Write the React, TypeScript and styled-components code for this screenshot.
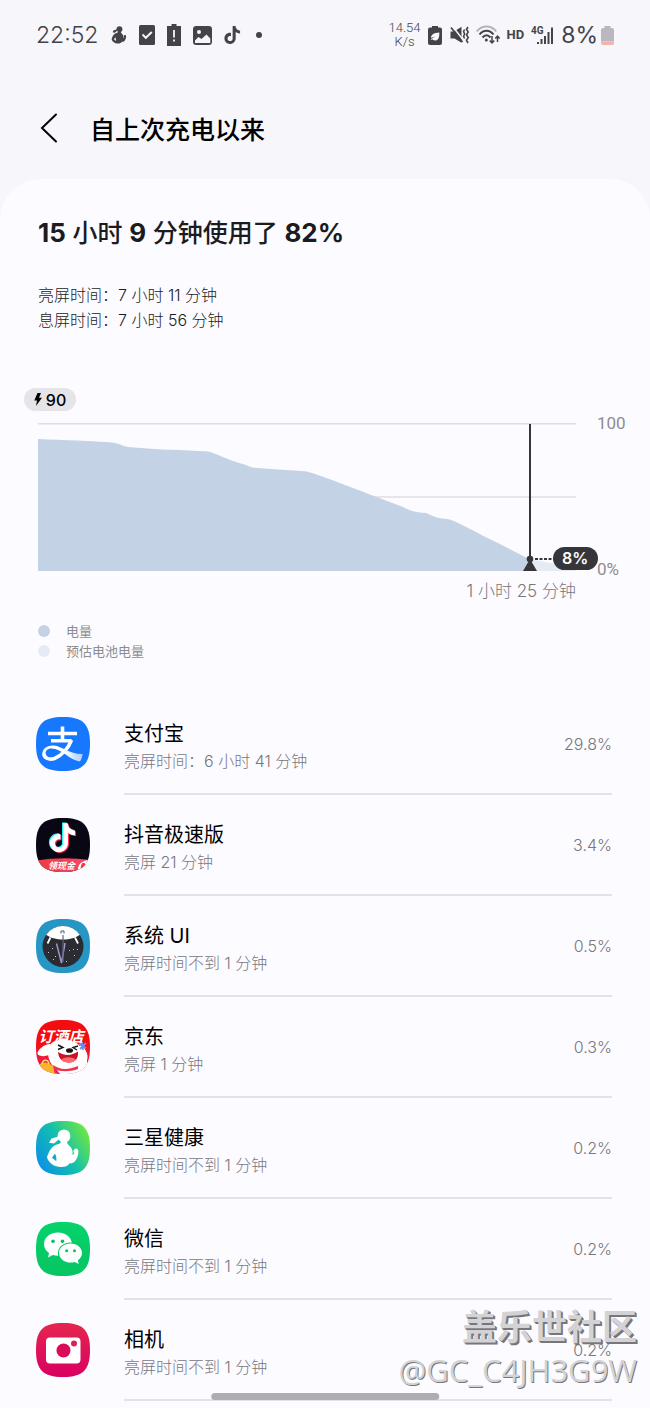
import React from "react";
import styled, { createGlobalStyle } from "styled-components";

const sans = `Inter, "Noto Sans CJK SC", sans-serif`;

const GlobalStyle = createGlobalStyle`
  * { box-sizing: border-box; }
  html { background: #f6f6fb; }
  body { margin: 0; font-family: ${sans}; color: #1b1b20; }
  h1, h2, h3, p, ul, dl, dd { margin: 0; padding: 0; }
  ul { list-style: none; }
  svg { display: block; flex: none; }
`;

const Screen = styled.div`
  display: flex;
  flex-direction: column;
  min-height: 100vh;
  background: #f6f6fb;
`;

const StatusBar = styled.header`
  display: flex;
  align-items: center;
  justify-content: space-between;
  height: 70px;
  padding: 0 36px;
  color: #444448;
`;

const StatusGroup = styled.div<{ $gap: number }>`
  display: flex;
  align-items: center;
  gap: ${(p) => p.$gap}px;
`;

const Clock = styled.time`
  font-size: 23px;
  font-weight: 300;
  line-height: 28px;
`;

const NetSpeed = styled.span`
  font: 300 13px/14px Roboto, sans-serif;
  text-align: center;
  width: 32px;
`;

const HdBadge = styled.span`
  font: 700 13px/16px Roboto, sans-serif;
`;

const BatteryLevel = styled.span`
  display: flex;
  align-items: center;
  gap: 3px;
  font-size: 23px;
  font-weight: 400;
  line-height: 28px;
`;

const TitleBar = styled.div`
  display: flex;
  align-items: center;
  gap: 26px;
  height: 109px;
  padding: 10px 36px 0;
`;

const BackButton = styled.button`
  display: flex;
  padding: 0 0 4px;
  border: 0;
  background: none;
  color: #000;
  cursor: pointer;
`;

const PageTitle = styled.h1`
  font-size: 25px;
  font-weight: 500;
  line-height: 36px;
  color: #000;
`;

const Card = styled.main`
  flex: 1;
  padding: 34px 38px 8px;
  border-radius: 40px 40px 0 0;
  background: #fcfbff;
`;

const Headline = styled.h2`
  font-size: 25px;
  font-weight: 500;
  line-height: 40px;
`;

const Figure = styled.strong`
  font-size: 26px;
  font-weight: 700;
`;

const Summary = styled.div`
  margin-top: 30px;
  font-size: 16px;
  font-weight: 300;
  line-height: 25px;
  color: #1b1b20;
`;

const Chart = styled.figure`
  display: grid;
  grid-template-columns: 1fr 62px;
  margin: 55px -26px 0 0;
`;

const ChargeTag = styled.span`
  grid-column: 1 / 3;
  justify-self: start;
  display: flex;
  align-items: center;
  justify-content: center;
  gap: 4px;
  width: 52px;
  height: 23px;
  margin: 0 0 12px -14px;
  border-radius: 12px;
  background: #e5e4e9;
  color: #000;
  font-size: 16px;
  font-weight: 500;
`;

const Plot = styled.div`
  position: relative;
  height: 148px;

  > svg { width: 100%; height: 100%; }
`;

const Marker = styled.div`
  position: absolute;
  left: 91%;
  top: 0;
  bottom: 0;
  display: flex;
  align-items: flex-end;
  margin-left: -6px;
  color: #36363a;

  &::before {
    content: "";
    position: absolute;
    left: 7px;
    top: 1px;
    bottom: 8px;
    width: 2px;
    background: currentColor;
  }
`;

const LevelTag = styled.span`
  align-self: flex-end;
  width: 45px;
  height: 23px;
  margin: 0 0 1px -1px;
  border-radius: 12px;
  background: #36363a;
  color: #fff;
  font-size: 16px;
  font-weight: 600;
  line-height: 23px;
  text-align: center;
`;

const Axis = styled.div`
  display: flex;
  flex-direction: column;
  justify-content: space-between;
  margin: -10px 0 -8px;
  padding-left: 21px;
  font: 400 17px/20px Roboto, sans-serif;
  color: #8d8d92;
`;

const Remaining = styled.figcaption`
  margin-top: 8px;
  text-align: right;
  font-size: 17px;
  font-weight: 300;
  line-height: 24px;
  color: #77777c;
`;

const Legend = styled.ul`
  margin-top: 18px;
  font-size: 13px;
  line-height: 20px;
  color: #8d8d92;
`;

const LegendItem = styled.li<{ $color: string }>`
  display: flex;
  align-items: center;
  gap: 16px;

  &::before {
    content: "";
    width: 12px;
    height: 12px;
    border-radius: 50%;
    background: ${(p) => p.$color};
  }
`;

const AppList = styled.ul`
  margin-top: 33px;
`;

const AppRow = styled.li`
  display: flex;
  align-items: center;
  gap: 34px;
  margin-left: -2px;

  > svg { margin-bottom: 2px; }
`;

const AppBody = styled.div`
  flex: 1;
  display: flex;
  align-items: center;
  justify-content: space-between;
  height: 101px;
  border-bottom: 2px solid #e3e2e8;
`;

const AppText = styled.div`
  padding-top: 6px;
`;

const AppName = styled.h3`
  font-size: 20px;
  font-weight: 400;
  line-height: 28px;
  color: #000;
`;

const AppDetail = styled.p`
  font-size: 16px;
  font-weight: 300;
  line-height: 26px;
  color: #77777c;
`;

const AppShare = styled.span`
  font-size: 16px;
  font-weight: 300;
  color: #77777c;
`;

const Watermark = styled.div`
  position: absolute;
  right: 13px;
  top: 1302px;
  text-align: right;
  pointer-events: none;
  color: #d3d3d5;
`;

const WatermarkSite = styled.p`
  font: 700 35px/46px "Noto Sans CJK SC", sans-serif;
  text-shadow: 1px 1px 0 #77777b, 2px 2px 0 #77777b;
`;

const WatermarkUser = styled.p`
  font: 400 31px/44px "Open Sans", sans-serif;
  text-shadow: 1px 1px 0 #77777b;
`;

const HomeHandle = styled.div`
  position: fixed;
  left: 50%;
  bottom: 8px;
  width: 35%;
  height: 7px;
  border-radius: 4px;
  background: #aeaeb2;
  transform: translateX(-50%);
`;

const NOTE =
  "M12.525.02c1.31-.02 2.61-.01 3.91-.02.08 1.53.63 3.09 1.75 4.17 1.12 1.11 2.7 1.62 4.24 1.79v4.03c-1.44-.05-2.89-.35-4.2-.97-.57-.26-1.1-.59-1.62-.93-.01 2.92.01 5.84-.02 8.75-.08 1.4-.54 2.79-1.35 3.94-1.31 1.92-3.58 3.17-5.91 3.21-1.43.08-2.86-.31-4.08-1.03-2.02-1.19-3.44-3.37-3.65-5.71-.02-.5-.03-1-.01-1.49.18-1.9 1.12-3.72 2.58-4.96 1.66-1.44 3.98-2.13 6.15-1.72.02 1.48-.04 2.96-.04 4.44-.99-.32-2.15-.23-3.02.37-.63.41-1.11 1.04-1.36 1.75-.21.51-.15 1.07-.14 1.61.24 1.64 1.82 3.02 3.5 2.87 1.12-.01 2.19-.66 2.77-1.61.19-.33.4-.67.41-1.06.1-1.79.06-3.57.07-5.36.01-4.03-.01-8.05.02-12.07z";

const SQUIRCLE =
  "M27 0C47 0 54 7 54 27S47 54 27 54 0 47 0 27 7 0 27 0Z";

const ATHLETE_HEAD =
  "M28 8.500a6.400 6.400 0 0 1 6.400 6.400c0 2.700-1.400 4.800-3.400 5.900h-6c-1-.6-1.800-1.400-2.400-2.400l-4.600 4.100-5-.8 2.500-4.300 6-1.600v-.9A6.500 6.500 0 0 1 28 8.500Z";
const ATHLETE_BODY =
  "M25 20h6c0 3 1.500 4 3.300 5.800 2 2 2.600 4.400 2.200 8.200l1.900-1.500c-1.200-1.500-1.400-3 0-4.300 1.500-1.300 3.900-.4 4 2 .1 4.300-1.600 8.300-4.200 10.800-1.700 1.600-3.500 1.500-4.700 1.200C32 45 29 46 25 46c-6.500 0-12.800-4-14-10 1.500-5 4-9.500 7.500-11.500 3-1.500 6.500-1.300 6.500-4.500Z";
const ATHLETE_GAP = "m19 32.500-3 4.300 4.300 3.500c.4-3-.1-5.500-1.300-7.800Z";

function Squircle({ id, fill, children }: { id: string; fill: string; children?: React.ReactNode }) {
  return (
    <svg width="54" height="54" viewBox="0 0 54 54" aria-hidden="true">
      <defs>
        <clipPath id={`clip-${id}`}><path d={SQUIRCLE} /></clipPath>
        <linearGradient id="health" x1="0" y1="0.8" x2="1" y2="0.2">
          <stop offset="0" stopColor="#0c8fe8" />
          <stop offset="0.5" stopColor="#12bfae" />
          <stop offset="1" stopColor="#74ea3c" />
        </linearGradient>
        <linearGradient id="camera" x1="0" y1="0" x2="0" y2="1">
          <stop offset="0" stopColor="#e5264f" />
          <stop offset="1" stopColor="#d80061" />
        </linearGradient>
        <linearGradient id="wechat" x1="0" y1="0" x2="0" y2="1">
          <stop offset="0" stopColor="#04d36b" />
          <stop offset="1" stopColor="#08c463" />
        </linearGradient>
        <linearGradient id="jd" x1="0" y1="0" x2="0" y2="1">
          <stop offset="0.4" stopColor="#f40d10" />
          <stop offset="1" stopColor="#e8246a" />
        </linearGradient>
        <linearGradient id="cash" x1="0" y1="0" x2="1" y2="0">
          <stop offset="0" stopColor="#ef3a43" />
          <stop offset="1" stopColor="#f5486e" />
        </linearGradient>
        <linearGradient id="swoosh" x1="0" y1="0" x2="1" y2="0">
          <stop offset="0.55" stopColor="#fff" />
          <stop offset="1" stopColor="#a9cdff" />
        </linearGradient>
      </defs>
      <g clipPath={`url(#clip-${id})`}>
        <path d="M0 0h54v54H0z" fill={fill} />
        {children}
      </g>
    </svg>
  );
}

const AlipayIcon = () => (
  <Squircle id="alipay" fill="#1677ff">
    <g fill="none" stroke="#fff">
      <path d="M12 16.500h29M26.500 9.500v13" strokeWidth="3.600" />
      <path d="M15 23.800h20.500" strokeWidth="3.400" />
      <path d="M35.500 23C32.500 31 26 38.500 18.500 41.500 12.500 43.500 7.800 40.500 8 36.500" strokeWidth="3.600" />
    </g>
    <path d="M6.400 37.500C6 31.500 11.500 27.800 18 28.500c8 .8 16 9 28.500 8.500-.2 3-1 5-2.500 7.500C33.500 43.500 26 31.600 15.500 31.600c-3.500 0-6 2-5.900 4.900Z" fill="url(#swoosh)" />
  </Squircle>
);

const DouyinIcon = () => (
  <Squircle id="douyin" fill="#080713">
    <g transform="translate(11 4.500) scale(1.200)">
      <path d={NOTE} fill="#25f4ee" />
      <path d={NOTE} fill="#fe2c55" transform="translate(1.800 1.400)" />
      <path d={NOTE} fill="#fff" transform="translate(.9 .7)" />
    </g>
    <path d="M0 42.500Q27 38.500 54 42v12H0Z" fill="url(#cash)" />
    <text x="25.500" y="51" fontSize="9" fontWeight="700" fontStyle="italic" textAnchor="middle" fill="#fff" fontFamily="Noto Sans CJK SC">领现金</text>
    <path d="M42 54c-1-7 3-11.500 12-12v12z" fill="#fff" />
    <ellipse cx="47" cy="48" rx="2" ry="3.200" fill="#ef3a43" transform="rotate(20 47 48)" />
  </Squircle>
);

const SystemUiIcon = () => (
  <Squircle id="system" fill="#2696c5">
    <circle cx="27" cy="27.500" r="20.500" fill="#2b2b32" />
    <path d="M10.200 15.700A20.500 20.500 0 0 1 43.800 15.700C36.500 22 17.500 22 10.200 15.700Z" fill="#fff" />
    <path d="m14.500 18.500-3 6M39 18.500l3 6" stroke="#fff" strokeWidth="1.800" />
    <path d="M20.500 24.500 25.500 44 29 24" stroke="#9c97c6" strokeWidth="1.500" fill="none" />
    <path d="M27 16v27" stroke="#66617e" strokeWidth="1.200" />
    <path d="M25 14.500v-2.500h3v2.500" stroke="#555" fill="none" />
    <path d="m12 33 1 1m6 3 1 1m13-7 1 1m4 4 1 1m-9 5 1 1m6-13 1 1M17 40l1 1m-2-12 1 1m24 0 1 1" stroke="#c8c8d8" strokeWidth="1" />
  </Squircle>
);

const JdIcon = () => (
  <Squircle id="jd" fill="url(#jd)">
    <path d="M14 24C8 24 2 30 1.500 33c0 4 9 4 13 1M44 24c6 4 10 13 6 18-3 2-5-1-6-5" fill="#fff" />
    <path d="M12 29C13 22 22 19 31 20c10 1 16 7 15.500 14 6 4 6 12 2 20H24c-2-4-9-8-11-15-1-4-1.500-7-1-10Z" fill="#fff" />
    <path d="M17 45c6 4 13 6 25 1v3c-8 3-18 3-24 0Z" fill="#f1344b" />
    <path d="M22 32c7 4 13 4 20-.5.5 7-2.500 11-9 11-6.500 0-10.500-4-11-10.500Z" fill="#c71527" />
    <path d="M25 39.500c5-3 10-3 15 0-2 2.500-4 3-7 3-3.500 0-6-.5-8-3Z" fill="#ff6b70" />
    <ellipse cx="33.500" cy="30.500" rx="3.500" ry="2.300" fill="#151515" />
    <path d="m22 25 5 2.500-5 2M42 26l-5 1.500 4 2.500" stroke="#181818" strokeWidth="1.400" fill="none" />
    <path d="m43 24 7 4m-6 1 6-6m-4-1 1 8" stroke="#6d8be8" strokeWidth="1.800" />
    <path d="M3 45c4-4 9-3 14 1l2 8H0Z" fill="#f7b52d" />
    <path d="M6 44c1-5 6-5 7 0" stroke="#ffdb62" strokeWidth="1.500" fill="none" />
    <text x="25" y="22" fontSize="15" fontWeight="700" fontStyle="italic" textAnchor="middle" fill="#fff" fontFamily="Noto Sans CJK SC">订酒店</text>
  </Squircle>
);

const HealthIcon = () => (
  <Squircle id="health" fill="url(#health)">
    <path d={ATHLETE_HEAD} fill="#fff" />
    <path d={ATHLETE_BODY} fill="#fff" />
    <path d={ATHLETE_GAP} fill="#13aac5" />
  </Squircle>
);

const WechatIcon = () => (
  <Squircle id="wechat" fill="url(#wechat)">
    <path d="M22 10.500C13.500 10.500 8 15.800 8 22c0 3.800 2 7 5 9l-1 4.500 4.800-2.500c1.700.5 3.400.8 5.200.8 8 0 14-5.200 14-11.500s-6-11.800-14-11.800Z" fill="#fff" />
    <ellipse cx="34.500" cy="31.200" rx="12.600" ry="10.800" fill="#06ca67" />
    <path d="M34.500 21.500c-6.500 0-11.500 4.200-11.500 9.500s5 9.600 11.500 9.600c1.500 0 3-.2 4.200-.6l4 2-.8-3.700c2.500-1.800 4.100-4.300 4.100-7.300 0-5.300-5-9.500-11.500-9.500Z" fill="#fff" />
    <g fill="#07bf62">
      <circle cx="17" cy="19.300" r="1.800" /><circle cx="26.500" cy="19.300" r="1.800" />
      <circle cx="30.700" cy="28.700" r="1.500" /><circle cx="38.500" cy="28.700" r="1.500" />
    </g>
  </Squircle>
);

const CameraIcon = () => (
  <Squircle id="camera" fill="url(#camera)">
    <rect x="10" y="14.500" width="34.500" height="26" rx="4" fill="#fff" />
    <circle cx="27.500" cy="27.500" r="7" fill="#d80c58" />
    <circle cx="38" cy="20.500" r="3" fill="#df2052" />
  </Squircle>
);

const HealthGlyph = () => (
  <svg width="16" height="18" viewBox="10 8 34 39" fill="currentColor" aria-hidden="true">
    <path d={ATHLETE_HEAD} />
    <path d={ATHLETE_BODY} />
    <path d={ATHLETE_GAP} fill="#f6f6fb" />
  </svg>
);

const CheckGlyph = () => (
  <svg width="16" height="20" viewBox="0 0 16 20" aria-hidden="true">
    <rect width="16" height="20" rx="1.500" fill="currentColor" />
    <path d="m3.500 9.500 3.300 3.300L12.800 7" stroke="#f6f6fb" strokeWidth="2" fill="none" />
  </svg>
);

const BatteryAlertGlyph = () => (
  <svg width="14" height="22" viewBox="0 0 14 22" aria-hidden="true">
    <path d="M4.500 0h5v2H14v20H0V2h4.500z" fill="currentColor" />
    <path d="M7 6v7.500M7 15.500v2" stroke="#f6f6fb" strokeWidth="1.800" />
  </svg>
);

const ImageGlyph = () => (
  <svg width="19" height="19" viewBox="0 0 19 19" aria-hidden="true">
    <rect x=".8" y=".8" width="17.400" height="17.400" rx="2.500" fill="currentColor" stroke="currentColor" strokeWidth="1.600" />
    <circle cx="6" cy="6" r="2" fill="#f6f6fb" />
    <path d="M2 14.500 5.500 11l3 2 5-4.500 3.800 4V17H2Z" fill="#f6f6fb" />
  </svg>
);

const NoteGlyph = () => (
  <svg width="18" height="18" viewBox="1 0 24 24" fill="currentColor" aria-hidden="true"><path d={NOTE} /></svg>
);

const DotGlyph = () => (
  <svg width="8" height="6" viewBox="0 0 8 6" aria-hidden="true"><circle cx="5" cy="3" r="3" fill="currentColor" /></svg>
);

const PowerSaveGlyph = () => (
  <svg width="14" height="19" viewBox="0 0 14 19" aria-hidden="true">
    <path d="M4 0h6v1.500h2q2 0 2 2V17q0 2-2 2H2q-2 0-2-2V3.500q0-2 2-2h2z" fill="currentColor" />
    <path d="M11.300 6.500c.3 5.500-1.300 8-4.300 8-1.200 0-2-.5-2.500-1.200L2.500 14c.5-1.500 2.500-2 4.500-3.500-2 .5-3 1-3.800 1.600C2.800 8.500 5.500 7 11.300 6.500Z" fill="#f6f6fb" />
  </svg>
);

const MuteGlyph = () => (
  <svg width="20" height="18" viewBox="-1 0 20 18" aria-hidden="true">
    <path d="M.5 5.500H4L11.500.8v16L4.500 12.500h-4z" fill="currentColor" />
    <path d="M2.200 0l12 15.200" stroke="#f6f6fb" strokeWidth="1.600" />
    <path d="M1 1.500 12.500 16" stroke="currentColor" strokeWidth="1.700" />
    <path d="M14.600 3.500l-1 2 1 2.500-1 2.500 1 2M18 1l-1.500 2.200L18.200 6l-1.700 2.700 1.700 2.800-1.700 2.700L18 17" stroke="currentColor" strokeWidth="1.600" fill="none" />
  </svg>
);

const WifiGlyph = () => (
  <svg width="24" height="20" viewBox="0 0 24 20" fill="none" stroke="currentColor" strokeWidth="2" aria-hidden="true">
    <path d="M.7 6.500C6-.2 15-.2 20.300 6.500" stroke="#b3b3b8" />
    <path d="M3.500 9.500C7.500 4.500 13.500 4.500 17.500 9.500M6.500 12.500c2.500-3 5.500-3 8 0" />
    <circle cx="10.300" cy="15" r="1.500" fill="currentColor" stroke="none" />
    <path d="M16 11v6.500M13.700 15.500 16 18l2.300-2.500M21.500 17v-5M19.300 13.500l2.200-2.300 2.200 2.300" strokeWidth="1.500" />
  </svg>
);

const SignalGlyph = () => (
  <svg width="23" height="22" viewBox="0 0 23 22" fill="currentColor" aria-hidden="true">
    <text x="0" y="10" fontFamily="Roboto" fontSize="10" fontWeight="700">4G</text>
    <path d="M6 18h2v2H6zM9.500 15h2v5h-2zM13 12h2v8h-2zM16.500 8h2v12h-2zM20 3.500h2V20h-2z" />
  </svg>
);

const BatteryGlyph = () => (
  <svg width="13" height="19" viewBox="0 0 13 19" aria-hidden="true">
    <path d="M3.500 0h6v2H11q2 0 2 2v11.500H0V4q0-2 2-2h1.500z" fill="#b9b8bf" />
    <path d="M0 15.500h13V17q0 2-2 2H2q-2 0-2-2z" fill="#f0b5a8" />
  </svg>
);

const BackGlyph = () => (
  <svg width="28" height="32" viewBox="0 0 28 32" fill="none" stroke="currentColor" strokeWidth="2" strokeLinecap="round" aria-hidden="true">
    <path d="M20 2.500 6 16 20 29.500" />
  </svg>
);

const BoltGlyph = () => (
  <svg width="8" height="13" viewBox="0 0 8 13" aria-hidden="true">
    <path d="M3.500 0H7L5 4.800h3L2 13l1-5.500H.3Z" fill="currentColor" />
  </svg>
);

const apps = [
  { name: "支付宝", detail: "亮屏时间：6 小时 41 分钟", share: "29.8%", Icon: AlipayIcon },
  { name: "抖音极速版", detail: "亮屏 21 分钟", share: "3.4%", Icon: DouyinIcon },
  { name: "系统 UI", detail: "亮屏时间不到 1 分钟", share: "0.5%", Icon: SystemUiIcon },
  { name: "京东", detail: "亮屏 1 分钟", share: "0.3%", Icon: JdIcon },
  { name: "三星健康", detail: "亮屏时间不到 1 分钟", share: "0.2%", Icon: HealthIcon },
  { name: "微信", detail: "亮屏时间不到 1 分钟", share: "0.2%", Icon: WechatIcon },
  { name: "相机", detail: "亮屏时间不到 1 分钟", share: "0.2%", Icon: CameraIcon },
];

export default function App() {
  return (
    <Screen>
      <GlobalStyle />
      <StatusBar>
        <StatusGroup $gap={12}>
          <Clock>22:52</Clock>
          <HealthGlyph />
          <CheckGlyph />
          <BatteryAlertGlyph />
          <ImageGlyph />
          <NoteGlyph />
          <DotGlyph />
        </StatusGroup>
        <StatusGroup $gap={7}>
          <NetSpeed>14.54 K/s</NetSpeed>
          <PowerSaveGlyph />
          <MuteGlyph />
          <WifiGlyph />
          <HdBadge>HD</HdBadge>
          <SignalGlyph />
          <BatteryLevel>8%<BatteryGlyph /></BatteryLevel>
        </StatusGroup>
      </StatusBar>
      <TitleBar>
        <BackButton type="button" aria-label="返回"><BackGlyph /></BackButton>
        <PageTitle>自上次充电以来</PageTitle>
      </TitleBar>
      <Card>
        <Headline>
          <Figure>15</Figure> 小时 <Figure>9</Figure> 分钟使用了 <Figure>82%</Figure>
        </Headline>
        <Summary>
          <p>亮屏时间：7 小时 11 分钟</p>
          <p>息屏时间：7 小时 56 分钟</p>
        </Summary>
        <Chart>
          <ChargeTag><BoltGlyph />90</ChargeTag>
          <Plot>
            <svg viewBox="0 0 538 148" preserveAspectRatio="none" aria-hidden="true">
              <path d="M0 .8h538M0 74h538M0 147.500h538" stroke="#dfdee5" strokeWidth="1.500" />
              <path d="M491 136 538 145v3h-47z" fill="#e4ebf4" />
              <path d="M0 16C25 17 55 18 74 19.500 82 20.500 84 23 90 24 115 26.500 145 27 170 28.500 180 31 190 37 203 40.500 208 41.500 211 44 216 44.800 235 46.500 253 47 269 48.500 290 55 315 65 341 75L365 84C373 88 377 89.500 388 90 395 93 399 95.500 410 96 425 101 440 111 460 120L491 136v12H0Z" fill="#c3d2e5" />
            </svg>
            <Marker>
              <svg width="32" height="17" viewBox="0 0 32 17" aria-hidden="true">
                <circle cx="8" cy="5" r="3.300" fill="currentColor" />
                <path d="M8 5 15 17H1Z" fill="currentColor" />
                <path d="M13 5h19" stroke="currentColor" strokeWidth="2" strokeDasharray="3 1.500" />
              </svg>
              <LevelTag>8%</LevelTag>
            </Marker>
          </Plot>
          <Axis><span>100</span><span>0%</span></Axis>
          <Remaining>1 小时 25 分钟</Remaining>
        </Chart>
        <Legend>
          <LegendItem $color="#c3d2e5">电量</LegendItem>
          <LegendItem $color="#e5eaf4">预估电池电量</LegendItem>
        </Legend>
        <AppList>
          {apps.map(({ name, detail, share, Icon }) => (
            <AppRow key={name}>
              <Icon />
              <AppBody>
                <AppText>
                  <AppName>{name}</AppName>
                  <AppDetail>{detail}</AppDetail>
                </AppText>
                <AppShare>{share}</AppShare>
              </AppBody>
            </AppRow>
          ))}
        </AppList>
      </Card>
      <Watermark>
        <WatermarkSite>盖乐世社区</WatermarkSite>
        <WatermarkUser>@GC_C4JH3G9W</WatermarkUser>
      </Watermark>
      <HomeHandle />
    </Screen>
  );
}
